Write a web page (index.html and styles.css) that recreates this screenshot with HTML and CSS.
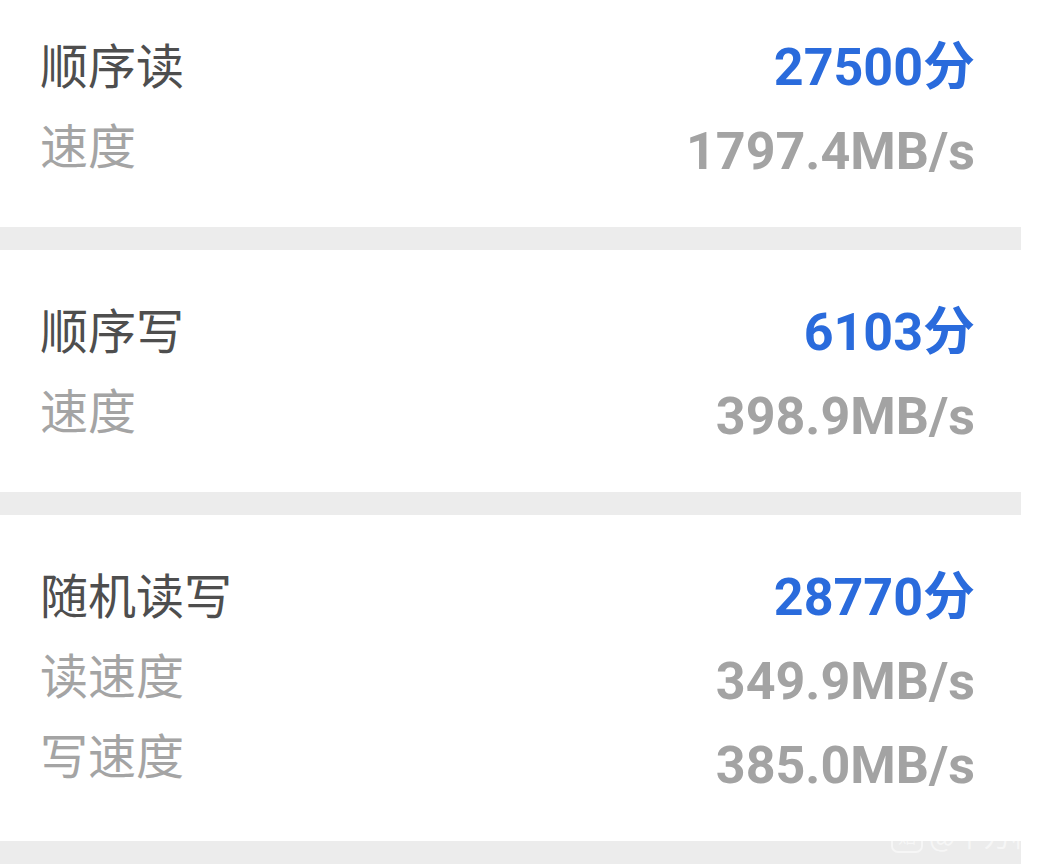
FILE: index.html
```html
<!DOCTYPE html>
<html lang="zh">
<head>
<meta charset="utf-8">
<link rel="stylesheet" href="styles.css">
</head>
<body>
<div class="page">
  <div class="list">
    <section class="card first">
      <div class="labels">
        <div class="title">顺序读</div>
        <div class="sub">速度</div>
      </div>
      <div class="values">
        <div class="score">27500分</div>
        <div class="speed">1797.4MB/s</div>
      </div>
    </section>
    <section class="card">
      <div class="labels">
        <div class="title">顺序写</div>
        <div class="sub">速度</div>
      </div>
      <div class="values">
        <div class="score">6103分</div>
        <div class="speed">398.9MB/s</div>
      </div>
    </section>
    <section class="card">
      <div class="labels">
        <div class="title">随机读写</div>
        <div class="sub">读速度</div>
        <div class="sub">写速度</div>
      </div>
      <div class="values">
        <div class="score">28770分</div>
        <div class="speed">349.9MB/s</div>
        <div class="speed">385.0MB/s</div>
      </div>
    </section>
    <div class="tail"></div>
  </div>
  <div class="watermark">
    <span class="wm-logo"><span class="wm-glyph">贴</span></span>
    <span class="wm-text">@平方根</span>
  </div>
</div>
</body>
</html>
```

FILE: styles.css
```css
html, body {
  margin: 0;
  padding: 0;
  background: #ffffff;
  overflow: hidden;
}

.page {
  position: relative;
  width: 1047px;
  height: 864px;
  overflow: hidden;
}

.list {
  width: 1021px;
  margin-top: -15px;
  background: #ececec;
  display: flex;
  flex-direction: column;
  gap: 23px;
}

.card {
  background: #ffffff;
  display: flex;
  justify-content: space-between;
  align-items: flex-start;
  padding: 41px 46px 33px 40px;
}

.labels {
  font-family: "Noto Sans CJK SC", "Noto Sans", sans-serif;
  font-size: 48px;
  line-height: 80px;
  margin-top: -3px;
}

.title {
  color: #4e4e4e;
}

.sub {
  color: #a4a4a4;
}

.values {
  text-align: right;
  font-family: Roboto, "Noto Sans CJK SC", sans-serif;
  font-weight: 700;
  font-size: 52px;
  line-height: 84px;
}

.score {
  color: #2a6bdc;
}

.speed {
  color: #a3a3a3;
}

.tail {
  height: 40px;
  background: #ececec;
}

.watermark {
  position: absolute;
  left: 891px;
  top: 816px;
  height: 38px;
  display: flex;
  align-items: center;
  gap: 6px;
  opacity: 0.55;
}

.wm-logo {
  width: 28px;
  height: 32px;
  border: 2px solid #ffffff;
  border-radius: 7px;
  display: flex;
  align-items: center;
  justify-content: center;
}

.wm-glyph {
  font-family: "Noto Sans CJK SC", sans-serif;
  font-size: 18px;
  line-height: 20px;
  color: #ffffff;
}

.wm-text {
  font-family: "Noto Sans CJK SC", sans-serif;
  font-size: 28px;
  line-height: 34px;
  color: #ffffff;
}
```
